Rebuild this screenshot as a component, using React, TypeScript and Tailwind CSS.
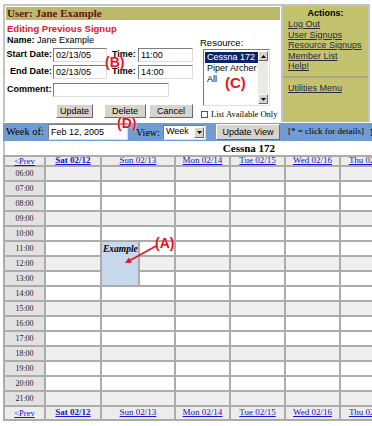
import React from 'react';

const sans = "font-['Liberation_Sans',Arial,sans-serif]";
const serif = "font-['Liberation_Serif','Times_New_Roman',serif]";

const inputBox =
  'bg-white border border-t-[#7c7c7c] border-l-[#7c7c7c] border-b-[#dcdcdc] border-r-[#dcdcdc] text-[9px] leading-[12px] pl-[2px] text-black';
const btn =
  'h-[14px] bg-[#d8d4cc] border border-t-white border-l-white border-b-[#6a6a6a] border-r-[#6a6a6a] text-[9px] leading-[12px] text-center text-black';

const days = ['Sat 02/12', 'Sun 02/13', 'Mon 02/14', 'Tue 02/15', 'Wed 02/16', 'Thu 02/17', 'Fri 02/18'];
const hours = Array.from({ length: 16 }, (_, i) => i + 6);

const pad = (h: number) => (h < 10 ? `0${h}:00` : `${h}:00`);

// header / footer row of the schedule grid
const DayRow: React.FC = () => (
  <>
    <div className={`bg-[#ececec] flex items-center justify-center ${serif} text-[8.5px] text-[#1414c8] underline`}>&lt;Prev</div>
    {days.map((d, i) => (
      <div
        key={d}
        className={`bg-[#ececec] flex items-center justify-center ${serif} text-[9px] text-[#1414c8] underline whitespace-nowrap ${i === 0 ? 'font-bold' : ''} ${i === 1 ? 'col-span-2' : ''}`}
      >
        {d}
      </div>
    ))}
    <div className={`bg-[#ececec] flex items-center justify-center ${serif} text-[8.5px] text-[#1414c8] underline`}>Next&gt;</div>
  </>
);

export default function App() {
  return (
    <div className="relative w-[372px] h-[426px] overflow-hidden bg-white">
      <div className="ml-[3px] pt-[4px] w-[490px]">
        {/* top panel */}
        <div className="w-[367px] h-[118px] border-2 border-b-0 border-[#c4c4c4] flex">
          <div className="w-[276px] p-[1px] flex flex-col">
            <div className={`h-[13px] w-[274px] bg-[#bab967] pl-[1px] ${serif} font-bold text-[11px] leading-[13px] text-[#651414]`}>
              User: Jane Example
            </div>
            <div className={`flex ${sans} text-black`}>
              {/* form */}
              <div className="w-[191px] flex flex-col">
                <div className="mt-[3px] h-[11px] pl-[1px] text-[9.5px] leading-[11px] font-bold text-[#e8142a]">Editing Previous Signup</div>
                <div className="mt-[1px] h-[11px] pl-[1px] text-[9px] leading-[11px]">
                  <span className="font-bold">Name:</span> Jane Example
                </div>
                <div className="mt-[2px] h-[14px] flex items-center text-[9px]">
                  <div className="w-[46px] text-right font-bold">Start Date:</div>
                  <div className={`ml-[1px] w-[54px] h-[14px] ${inputBox}`}>02/13/05</div>
                  <div className="ml-[5px] w-[24px] font-bold">Time:</div>
                  <div className={`ml-[2px] w-[55px] h-[14px] ${inputBox}`}>11:00</div>
                </div>
                <div className="mt-[3px] h-[14px] flex items-center text-[9px]">
                  <div className="w-[46px] text-right font-bold">End Date:</div>
                  <div className={`ml-[1px] w-[54px] h-[14px] ${inputBox}`}>02/13/05</div>
                  <div className="ml-[5px] w-[24px] font-bold">Time:</div>
                  <div className={`ml-[2px] w-[55px] h-[14px] ${inputBox}`}>14:00</div>
                </div>
                <div className="mt-[4px] h-[14px] flex items-center text-[9px]">
                  <div className="w-[47px] pl-[1px] font-bold">Comment:</div>
                  <div className={`w-[116px] h-[14px] ${inputBox}`}></div>
                </div>
                <div className="mt-[7px] flex">
                  <div className={`ml-[50px] w-[37px] ${btn}`}>Update</div>
                  <div className={`ml-[11px] w-[42px] ${btn}`}>Delete</div>
                  <div className={`ml-[3px] w-[44px] ${btn}`}>Cancel</div>
                </div>
              </div>
              {/* resource */}
              <div className="w-[83px] flex flex-col">
                <div className="mt-[18px] h-[10px] pl-[3px] text-[9.5px] leading-[10px]">Resource:</div>
                <div className="mt-[1px] ml-[6px] w-[67px] h-[57px] bg-white border border-t-[#7c7c7c] border-l-[#7c7c7c] border-b-[#e2e2e2] border-r-[#e2e2e2] p-[1px] flex">
                  <div className="flex-1 min-w-0 pt-[1px] text-[9px] leading-[11px] whitespace-nowrap overflow-hidden">
                    <div className="bg-[#0a246a] text-white pl-[2px]">Cessna 172</div>
                    <div className="pl-[2px]">Piper Archer</div>
                    <div className="pl-[2px]">All</div>
                  </div>
                  <div className="w-[10px] flex flex-col bg-[#ebe9e4]">
                    <div className="h-[10px] bg-[#d8d4cc] border border-t-white border-l-white border-b-[#6a6a6a] border-r-[#6a6a6a] flex items-center justify-center">
                      <svg width="5" height="3" viewBox="0 0 5 3"><polygon points="2.5,0 5,3 0,3" fill="#000" /></svg>
                    </div>
                    <div className="flex-1" />
                    <div className="h-[10px] bg-[#d8d4cc] border border-t-white border-l-white border-b-[#6a6a6a] border-r-[#6a6a6a] flex items-center justify-center">
                      <svg width="5" height="3" viewBox="0 0 5 3"><polygon points="0,0 5,0 2.5,3" fill="#000" /></svg>
                    </div>
                  </div>
                </div>
                <div className="mt-[4px] ml-[4px] h-[8px] flex items-center">
                  <div className="w-[7px] h-[7px] bg-white border border-[#555]" />
                  <span className={`ml-[3px] ${serif} text-[8.5px] leading-[8px] whitespace-nowrap`}>List Available Only</span>
                </div>
              </div>
            </div>
          </div>
          <div className="w-[2px] bg-[#c4c4c4]" />
          {/* actions */}
          <div className={`w-[85px] bg-[#c3c26f] flex flex-col ${sans} text-[9px]`}>
            <div className="mt-[2px] h-[10px] leading-[10px] text-center font-bold text-black">Actions:</div>
            <div className="mt-[1px] pl-[5px] leading-[10.6px] text-[#2a2a3c] underline">
              <div>Log Out</div>
              <div>User Signups</div>
              <div>Resource Signups</div>
              <div>Member List</div>
              <div>Help!</div>
            </div>
            <div className="mt-[4px] h-[2px] bg-[#a9a77f]" />
            <div className="mt-[5px] pl-[5px] leading-[10.6px] text-[#2a2a3c] underline">Utilities Menu</div>
          </div>
        </div>

        {/* toolbar */}
        <div className="mt-[1px] h-[18px] w-[490px] bg-[#6f9dd3] flex items-center pl-[3px] whitespace-nowrap">
          <div className={`w-[42px] ${serif} text-[10.5px] text-black`}>Week of:</div>
          <div className={`w-[80px] h-[16px] flex items-center ${sans} ${inputBox}`}>Feb 12, 2005</div>
          <div className={`ml-[8px] w-[27px] ${serif} text-[10px] text-black`}>View:</div>
          <div className="w-[43px] h-[15px] bg-white border border-t-[#7c7c7c] border-l-[#7c7c7c] border-b-[#dcdcdc] border-r-[#dcdcdc] flex items-center">
            <span className={`flex-1 pl-[2px] ${sans} text-[9px]`}>Week</span>
            <div className="w-[10px] h-[11px] mr-[1px] bg-[#d8d4cc] border border-t-white border-l-white border-b-[#6a6a6a] border-r-[#6a6a6a] flex items-center justify-center">
              <svg width="5" height="3" viewBox="0 0 5 3"><polygon points="0,0 5,0 2.5,3" fill="#000" /></svg>
            </div>
          </div>
          <div className={`ml-[10px] w-[64px] ${btn} h-[16px] leading-[14px] ${sans}`}>Update View</div>
          <span className={`ml-[8px] ${serif} text-[9px] text-black`}>[* = click for details]</span>
          <span className={`ml-[6px] ${serif} text-[10px] text-black`}>Next Week &gt;</span>
        </div>

        {/* title */}
        <div className={`h-[14px] border-l-2 border-[#c4c4c4] text-center ${serif} font-bold text-[11px] leading-[14px] text-black`}>
          Cessna 172
        </div>

        {/* schedule */}
        <div className="w-[490px] bg-[#acacac] p-[2px] grid gap-[2px] grid-cols-[39px_54px_36px_34px_53px_53px_53px_53px_53px_40px] grid-rows-[8px_repeat(16,13px)_12px]">
          <DayRow />
          {hours.map((h, i) => {
            const row = i % 3 === 0 ? 'bg-[#efefef]' : 'bg-white';
            return (
              <React.Fragment key={h}>
                <div className={`bg-[#e2e2e2] flex items-center justify-center ${serif} text-[8px] text-[#222]`}>{pad(h)}</div>
                <div className={row} />
                {h === 11 && (
                  <div className={`row-span-3 bg-[#c8d8ed] pl-[1px] pt-[2px] ${serif} italic font-bold text-[9.5px] leading-[10px] text-black`}>
                    Example
                  </div>
                )}
                {h >= 11 && h <= 13 ? <div className={row} /> : <div className={`col-span-2 ${row}`} />}
                <div className={row} />
                <div className={row} />
                <div className={row} />
                <div className={row} />
                <div className={row} />
                <div className={`bg-[#e2e2e2] flex items-center justify-center ${serif} text-[8px] text-[#222]`}>{pad(h)}</div>
              </React.Fragment>
            );
          })}
          <DayRow />
        </div>
      </div>

      {/* annotations */}
      <div className={`absolute left-[105px] top-[54px] ${sans} font-bold text-[14px] leading-[16px] text-[#e8141c]`}>(B)</div>
      <div className={`absolute left-[225px] top-[74px] ${sans} font-bold text-[15px] leading-[17px] text-[#e8141c]`}>(C)</div>
      <div className={`absolute left-[117px] top-[115px] ${sans} font-bold text-[14px] leading-[16px] text-[#e8141c] [text-shadow:0_0_2px_white]`}>(D)</div>
      <div className={`absolute left-[155px] top-[235px] ${sans} font-bold text-[14px] leading-[16px] text-[#e8141c]`}>(A)</div>
      <svg className="absolute left-[120px] top-[238px]" width="45" height="30" viewBox="0 0 45 30">
        <line x1="36" y1="8" x2="9" y2="23" stroke="#e8141c" strokeWidth="1.5" />
        <polygon points="5,25 11.7,24.7 8.9,19.5" fill="#e8141c" />
      </svg>
    </div>
  );
}
